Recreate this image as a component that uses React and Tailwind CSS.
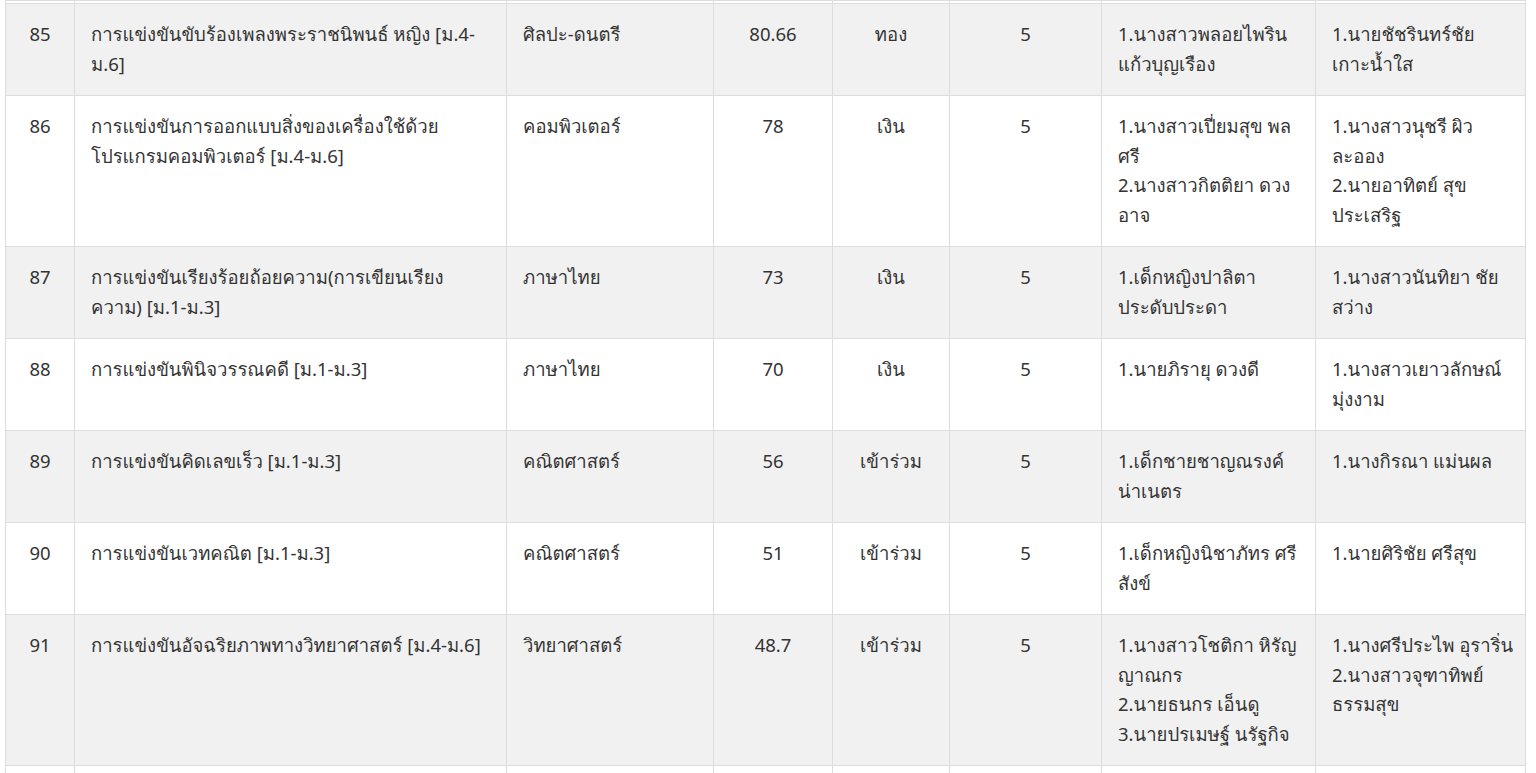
import React from 'react';

const rows = [
  {
    no: 85,
    name: ['การแข่งขันขับร้องเพลงพระราชนิพนธ์ หญิง [ม.4-', 'ม.6]'],
    group: 'ศิลปะ-ดนตรี',
    score: '80.66',
    medal: 'ทอง',
    rank: '5',
    students: ['1.นางสาวพลอยไพริน', 'แก้วบุญเรือง'],
    teachers: ['1.นายชัชรินทร์ชัย', 'เกาะน้ำใส'],
  },
  {
    no: 86,
    name: ['การแข่งขันการออกแบบสิ่งของเครื่องใช้ด้วย', 'โปรแกรมคอมพิวเตอร์ [ม.4-ม.6]'],
    group: 'คอมพิวเตอร์',
    score: '78',
    medal: 'เงิน',
    rank: '5',
    students: ['1.นางสาวเปี่ยมสุข พล', 'ศรี', '2.นางสาวกิตติยา ดวง', 'อาจ'],
    teachers: ['1.นางสาวนุชรี ผิว', 'ละออง', '2.นายอาทิตย์ สุข', 'ประเสริฐ'],
  },
  {
    no: 87,
    name: ['การแข่งขันเรียงร้อยถ้อยความ(การเขียนเรียง', 'ความ) [ม.1-ม.3]'],
    group: 'ภาษาไทย',
    score: '73',
    medal: 'เงิน',
    rank: '5',
    students: ['1.เด็กหญิงปาลิตา', 'ประดับประดา'],
    teachers: ['1.นางสาวนันทิยา ชัย', 'สว่าง'],
  },
  {
    no: 88,
    name: ['การแข่งขันพินิจวรรณคดี [ม.1-ม.3]'],
    group: 'ภาษาไทย',
    score: '70',
    medal: 'เงิน',
    rank: '5',
    students: ['1.นายภิรายุ ดวงดี'],
    teachers: ['1.นางสาวเยาวลักษณ์', 'มุ่งงาม'],
  },
  {
    no: 89,
    name: ['การแข่งขันคิดเลขเร็ว [ม.1-ม.3]'],
    group: 'คณิตศาสตร์',
    score: '56',
    medal: 'เข้าร่วม',
    rank: '5',
    students: ['1.เด็กชายชาญณรงค์', 'น่าเนตร'],
    teachers: ['1.นางกิรณา แม่นผล'],
  },
  {
    no: 90,
    name: ['การแข่งขันเวทคณิต [ม.1-ม.3]'],
    group: 'คณิตศาสตร์',
    score: '51',
    medal: 'เข้าร่วม',
    rank: '5',
    students: ['1.เด็กหญิงนิชาภัทร ศรี', 'สังข์'],
    teachers: ['1.นายศิริชัย ศรีสุข'],
  },
  {
    no: 91,
    name: ['การแข่งขันอัจฉริยภาพทางวิทยาศาสตร์ [ม.4-ม.6]'],
    group: 'วิทยาศาสตร์',
    score: '48.7',
    medal: 'เข้าร่วม',
    rank: '5',
    students: ['1.นางสาวโชติกา หิรัญ', 'ญาณกร', '2.นายธนกร เอ็นดู', '3.นายปรเมษฐ์ นรัฐกิจ'],
    teachers: ['1.นางศรีประไพ อุราริ่น', '2.นางสาวจุฑาทิพย์', 'ธรรมสุข'],
  },
];

function Lines({ items }) {
  return items.map((t, i) => (
    <React.Fragment key={i}>
      {i > 0 && <br />}
      {t}
    </React.Fragment>
  ));
}

export default function App() {
  const td = 'border border-[#dddddd] px-4 pt-[15px] pb-[17px] align-top whitespace-nowrap';
  return (
    <div className="min-h-screen bg-white pl-[5px] text-[#333333] font-['Noto_Sans','Loma',sans-serif] text-[18.5px] leading-[29.5px]">
      <table className="w-[1520px] table-fixed border-collapse">
        <colgroup>
          <col className="w-[69px]" />
          <col className="w-[432px]" />
          <col className="w-[207px]" />
          <col className="w-[119px]" />
          <col className="w-[117px]" />
          <col className="w-[152px]" />
          <col className="w-[214px]" />
          <col className="w-[210px]" />
        </colgroup>
        <tbody>
          <tr className="h-[3px]">
            {Array.from({ length: 8 }).map((_, i) => (
              <td key={i} className="border border-[#dddddd] p-0 h-[3px]" />
            ))}
          </tr>
          {rows.map((r, idx) => (
            <tr key={r.no} className={idx % 2 === 0 ? 'bg-[#f1f1f1]' : 'bg-white'}>
              <td className={`${td} text-center`}>{r.no}</td>
              <td className={td}>
                <Lines items={r.name} />
              </td>
              <td className={td}>{r.group}</td>
              <td className={`${td} text-center`}>{r.score}</td>
              <td className={`${td} text-center`}>{r.medal}</td>
              <td className={`${td} text-center`}>{r.rank}</td>
              <td className={td}>
                <Lines items={r.students} />
              </td>
              <td className={td}>
                <Lines items={r.teachers} />
              </td>
            </tr>
          ))}
          <tr>
            {Array.from({ length: 8 }).map((_, i) => (
              <td key={i} className={td}>
                &nbsp;
              </td>
            ))}
          </tr>
        </tbody>
      </table>
    </div>
  );
}
